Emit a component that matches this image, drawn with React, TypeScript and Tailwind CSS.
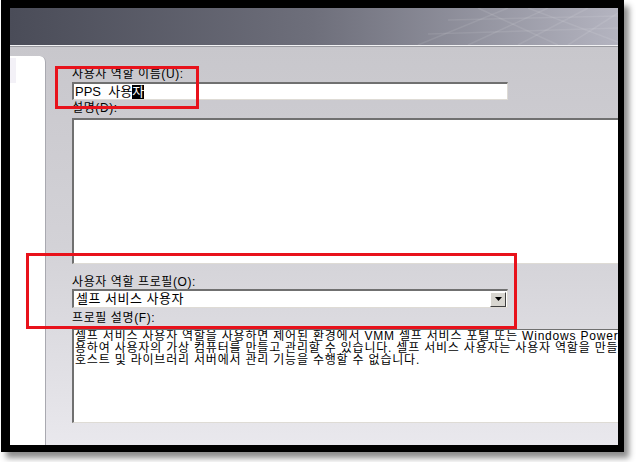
const font = { fontFamily: '"Liberation Sans", "Noto Sans CJK KR", sans-serif' }

function HeaderGrid() {
  return (
    <svg className="absolute right-0 top-0 h-full w-[260px]" viewBox="0 0 260 37" preserveAspectRatio="none">
      <g stroke="#ffffff" strokeOpacity="0.09" strokeWidth="1.5" fill="none">
        <path d="M60 37 L150 0" />
        <path d="M110 37 L190 0" />
        <path d="M160 37 L230 0" />
        <path d="M210 37 L260 5" />
        <path d="M120 0 L200 37" />
        <path d="M170 0 L260 34" />
        <path d="M90 12 L260 8" />
        <path d="M70 26 L260 20" />
      </g>
    </svg>
  )
}

export default function App() {
  const desc = [
    "셀프 서비스 사용자 역할을 사용하면 제어된 환경에서 VMM 셀프 서비스 포털 또는 Windows PowerShell을 사",
    "용하여 사용자의 가상 컴퓨터를 만들고 관리할 수 있습니다. 셀프 서비스 사용자는 사용자 역할을 만들거나",
    "호스트 및 라이브러리 서버에서 관리 기능을 수행할 수 없습니다.",
  ]

  return (
    <div className="w-[636px] h-[462px] bg-white overflow-hidden" style={font}>
      <div className="ml-[1px] w-[623px] h-[452px] bg-black pt-[8px] pl-[9px] pr-[6px] pb-[7px] shadow-[5px_6px_6px_rgba(0,0,0,0.45)]">
        <div className="relative w-[608px] h-[437px] overflow-hidden flex flex-col">
          {/* header */}
          <div className="relative h-[37px] shrink-0 bg-gradient-to-r from-[#4a4c58] via-[#6e6f7b] to-[#b4b4c0]">
            <HeaderGrid />
          </div>
          <div className="h-[1px] bg-[#f2f2f4]" />
          <div className="h-[1px] bg-[#9a9aa0]" />

          {/* body */}
          <div className="flex flex-1 bg-gradient-to-b from-[#c8c7cc] via-[#d3d2d7] to-[#e9e8ed]">
            <div className="mt-[9px] w-[36px] shrink-0 bg-white rounded-tr-[6px] border-r border-[#a9a9b0]">
              <div className="mt-[2px] h-[25px] w-[6px] bg-[#f3f1f7]" />
            </div>

            <div className="flex-1 pl-[26px] pt-[19px] text-[12px] leading-[14px] text-black">
              <div className="h-[16px] pt-[1px] tracking-[0.6px]">사용자 역할 이름(U):</div>
              <div className="w-[436px] h-[18px] bg-white border-t-2 border-l-2 border-[#707070] border-r border-b border-r-[#dedbd5] border-b-[#dedbd5] flex items-center pl-[1px] text-[13px]">
                <span>PPS&nbsp;&nbsp;사용</span>
                <span className="bg-black text-white leading-[14px]">자</span>
              </div>
              <div className="h-[18px] pt-[1px] tracking-[0.6px]">설명(D):</div>
              <div className="h-[146px] bg-white border-t-2 border-l-2 border-[#707070] border-b border-b-[#dedbd5]" />

              <div className="h-[7px]" />
              <div className="h-[18px] pt-[4px] tracking-[0.6px]">사용자 역할 프로필(O):</div>
              <div className="w-[436px] h-[19px] bg-white border-t-2 border-l-2 border-[#707070] border-r border-b border-r-[#dedbd5] border-b-[#dedbd5] flex items-center pl-[2px] text-[13px] tracking-[0.5px]">
                <span className="flex-1">셀프 서비스 사용자</span>
                <div className="w-[16px] h-[15px] mr-[1px] bg-[#d8d6d0] border border-t-white border-l-white border-r-[#404040] border-b-[#404040] flex items-center justify-center">
                  <svg width="7" height="4" viewBox="0 0 7 4"><path d="M0 0h7L3.5 4z" fill="#000" /></svg>
                </div>
              </div>
              <div className="h-[21px] pt-[3px] tracking-[0.6px]">프로필 설명(F):</div>
              <div className="h-[94px] bg-white border-l-2 border-t border-[#707070] border-b border-b-[#dedbd5] pl-[1px] text-[12px] leading-[12px] tracking-[0.8px] whitespace-nowrap overflow-hidden">
                {desc.map((l) => (
                  <div key={l}>{l}</div>
                ))}
              </div>
            </div>
          </div>

          {/* annotation boxes */}
          <div className="absolute left-[45px] top-[58px] w-[144px] h-[43px] border-[3px] border-[#e8121b]" />
          <div className="absolute left-[16px] top-[245px] w-[491px] h-[76px] border-[3px] border-[#e8121b]" />
        </div>
      </div>
    </div>
  )
}
